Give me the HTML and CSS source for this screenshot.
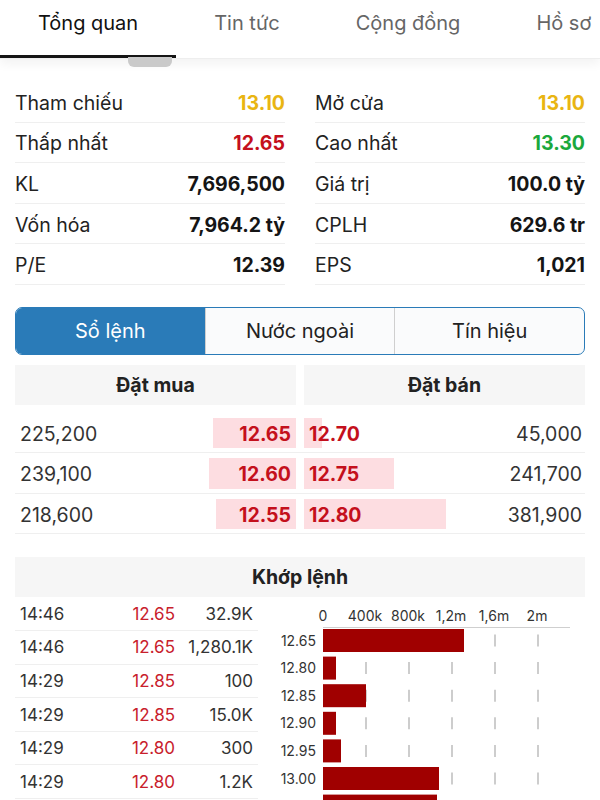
FILE: index.html
```html
<!DOCTYPE html>
<html lang="vi">
<head>
	<meta charset="UTF-8">
	<title>Tổng quan</title>
	<link rel="stylesheet" href="styles.css">
</head>
<body>
	<div class="tabs">
		<div class="tab active">Tổng quan</div>
		<div class="tab">Tin tức</div>
		<div class="tab">Cộng đồng</div>
		<div class="tab">Hồ sơ</div>
		<span class="thumb"></span>
	</div>

	<div class="stats">
		<div class="stat"><span>Tham chiếu</span><b class="ref">13.10</b></div>
		<div class="stat"><span>Mở cửa</span><b class="ref">13.10</b></div>
		<div class="stat"><span>Thấp nhất</span><b class="down">12.65</b></div>
		<div class="stat"><span>Cao nhất</span><b class="up">13.30</b></div>
		<div class="stat"><span>KL</span><b>7,696,500</b></div>
		<div class="stat"><span>Giá trị</span><b>100.0 tỷ</b></div>
		<div class="stat"><span>Vốn hóa</span><b>7,964.2 tỷ</b></div>
		<div class="stat"><span>CPLH</span><b>629.6 tr</b></div>
		<div class="stat"><span>P/E</span><b>12.39</b></div>
		<div class="stat"><span>EPS</span><b>1,021</b></div>
	</div>

	<div class="segment">
		<div class="seg active">Sổ lệnh</div>
		<div class="seg">Nước ngoài</div>
		<div class="seg">Tín hiệu</div>
	</div>

	<div class="book-head">
		<div>Đặt mua</div>
		<div>Đặt bán</div>
	</div>
	<div class="book">
		<div class="book-row">
			<div class="bid"><i style="width:83px"></i><span>225,200</span><b>12.65</b></div>
			<div class="ask"><i style="width:18px"></i><b>12.70</b><span>45,000</span></div>
		</div>
		<div class="book-row">
			<div class="bid"><i style="width:87px"></i><span>239,100</span><b>12.60</b></div>
			<div class="ask"><i style="width:90px"></i><b>12.75</b><span>241,700</span></div>
		</div>
		<div class="book-row">
			<div class="bid"><i style="width:80px"></i><span>218,600</span><b>12.55</b></div>
			<div class="ask"><i style="width:142px"></i><b>12.80</b><span>381,900</span></div>
		</div>
	</div>

	<div class="match-head">Khớp lệnh</div>
	<div class="match">
		<div class="trades">
			<div class="trade"><span>14:46</span><span class="price">12.65</span><span>32.9K</span></div>
			<div class="trade"><span>14:46</span><span class="price">12.65</span><span>1,280.1K</span></div>
			<div class="trade"><span>14:29</span><span class="price">12.85</span><span>100</span></div>
			<div class="trade"><span>14:29</span><span class="price">12.85</span><span>15.0K</span></div>
			<div class="trade"><span>14:29</span><span class="price">12.80</span><span>300</span></div>
			<div class="trade"><span>14:29</span><span class="price">12.80</span><span>1.2K</span></div>
		</div>
		<svg class="chart" width="342" height="204" viewBox="258 596 342 204">
			<g class="ticks" text-anchor="middle">
				<text x="323" y="620">0</text>
				<text x="365" y="620">400k</text>
				<text x="408" y="620">800k</text>
				<text x="451" y="620">1,2m</text>
				<text x="494" y="620">1,6m</text>
				<text x="537" y="620">2m</text>
			</g>
			<line x1="323" y1="626.5" x2="570" y2="626.5" stroke="#cfcfcf"/>
			<g class="grid" stroke="#bdbdbd" stroke-width="1.5" stroke-dasharray="12 15.6">
				<line x1="366" y1="633.5" x2="366" y2="800"/>
				<line x1="409" y1="633.5" x2="409" y2="800"/>
				<line x1="452" y1="633.5" x2="452" y2="800"/>
				<line x1="495" y1="633.5" x2="495" y2="800"/>
				<line x1="538" y1="633.5" x2="538" y2="800"/>
			</g>
			<g fill="#a00000">
				<rect x="323" y="628" width="141" height="23"/>
				<rect x="323" y="655.6" width="13" height="23"/>
				<rect x="323" y="683.2" width="43" height="23"/>
				<rect x="323" y="710.8" width="13" height="23"/>
				<rect x="323" y="738.4" width="18" height="23"/>
				<rect x="323" y="766" width="116" height="23"/>
				<rect x="323" y="793.6" width="114" height="23"/>
			</g>
			<g class="labels" text-anchor="end">
				<text x="316" y="644.5">12.65</text>
				<text x="316" y="672.1">12.80</text>
				<text x="316" y="699.7">12.85</text>
				<text x="316" y="727.3">12.90</text>
				<text x="316" y="754.9">12.95</text>
				<text x="316" y="782.5">13.00</text>
			</g>
		</svg>
	</div>
</body>
</html>
```

FILE: styles.css
```css
*{ margin: 0; padding: 0; box-sizing: border-box;}
body{ width: 600px; height: 800px; overflow: hidden; background: #fff; color: #222; font-family: Inter, "Noto Sans", sans-serif; font-size: 19.5px;}
b{ font-weight: 700;}

.tabs{ position: relative; display: flex; height: 58px; white-space: nowrap; box-shadow: 0 1px 0 #eeeeee, 0 6px 10px rgba(0,0,0,.05);}
.tab{ flex: none; height: 58px; padding: 9px 38px 0; line-height: 28px; font-size: 20px; color: #666; border-bottom: 3px solid transparent;}
.tab.active{ color: #111; border-bottom-color: #151515;}
.thumb{ position: absolute; left: 128px; top: 57px; width: 44px; height: 10px; border-radius: 0 0 6px 6px; background: #cacaca;}

.stats{ display: grid; grid-template-columns: 1fr 1fr; column-gap: 30px; margin-top: 24px; padding: 0 15px;}
.stat{ display: flex; justify-content: space-between; align-items: center; height: 40.6px; padding-top: 2px; border-bottom: 1px solid #efefef;}
.stat b{ color: #151515;}
.stat .ref{ color: #e9b512;}
.stat .down{ color: #c4101c;}
.stat .up{ color: #1ba83c;}

.segment{ display: flex; height: 48px; margin: 22px 15px 0; border: 1px solid #2a7bb8; border-radius: 7px; overflow: hidden; background: #fafbfc; font-size: 20px;}
.seg{ flex: 1; display: flex; justify-content: center; align-items: center; color: #222; border-left: 1px solid #cfcfcf;}
.seg:first-child{ border-left: 0;}
.seg.active{ background: #2a7bb8; color: #fff;}

.book-head{ display: grid; grid-template-columns: 1fr 1fr; column-gap: 8px; margin: 10px 15px 0;}
.book-head div{ height: 40px; line-height: 40px; text-align: center; font-weight: 700; background: #f6f6f6;}
.book{ margin: 8px 15px 0;}
.book-row{ display: grid; grid-template-columns: 1fr 1fr; column-gap: 8px; height: 40.5px; padding: 5px 0 4px; border-bottom: 1px solid #efefef;}
.bid, .ask{ position: relative; display: flex; justify-content: space-between; align-items: center; padding: 1px 5px 0;}
.bid i, .ask i{ position: absolute; top: 0; bottom: 0; background: #fddde1;}
.bid i{ right: 0;}
.ask i{ left: 0;}
.bid span, .bid b, .ask span, .ask b{ position: relative;}
.book b{ color: #c4101c;}
.book span{ color: #333;}
.ask span{ margin-right: -2px;}

.match-head{ height: 40px; line-height: 40px; margin: 23px 15px 0; text-align: center; font-weight: 700; background: #f6f6f6;}
.match{ display: flex;}
.trades{ width: 243px; margin-left: 15px; font-size: 17px; color: #333;}
.trade{ display: grid; grid-template-columns: 60px 95px 78px; height: 33.6px; padding: 0 5px; align-items: center; border-bottom: 1px solid #efefef;}
.trade span:nth-child(2), .trade span:nth-child(3){ text-align: right;}
.trade .price{ color: #c8202c;}
.chart{ display: block; flex: none; font-family: Inter, sans-serif; font-size: 14px;}
.chart text{ fill: #333;}
```
